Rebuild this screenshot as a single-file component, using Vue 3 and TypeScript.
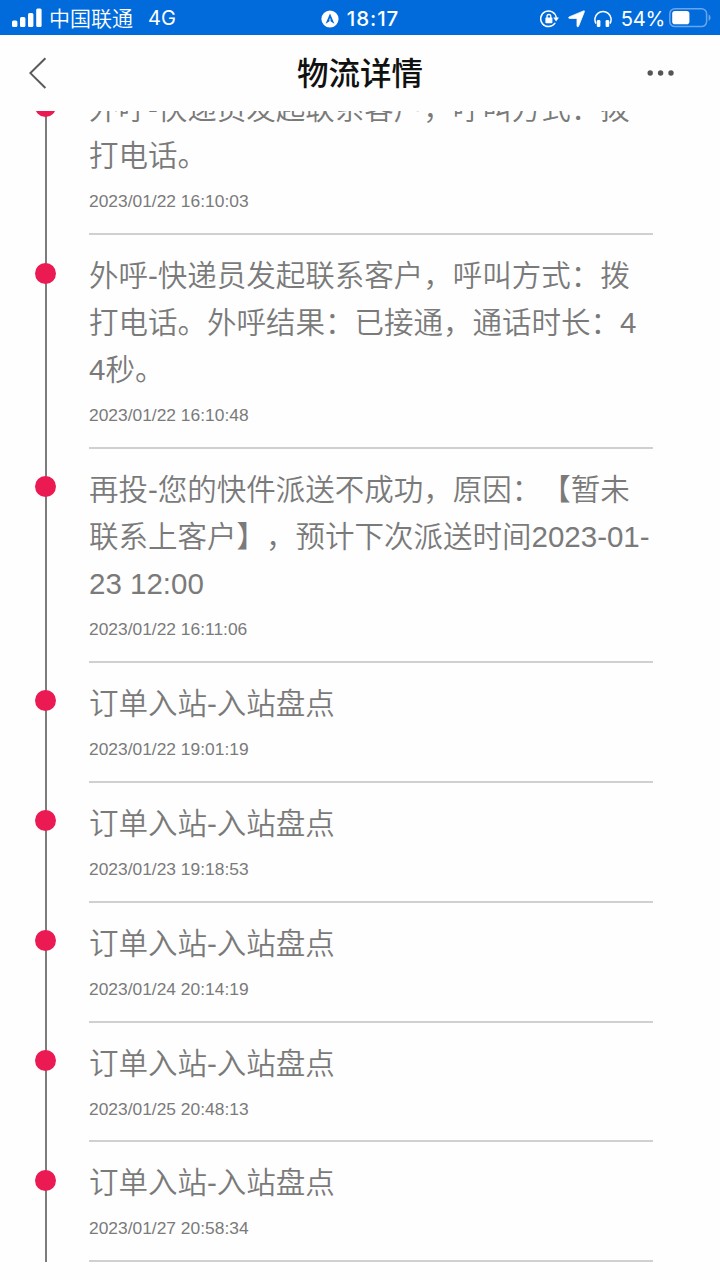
<script setup lang="ts">
interface TrackEvent {
  lines: string[]
  time: string
}

const events: TrackEvent[] = [
  { lines: ['外呼-快递员发起联系客户，呼叫方式：拨', '打电话。'], time: '2023/01/22 16:10:03' },
  { lines: ['外呼-快递员发起联系客户，呼叫方式：拨', '打电话。外呼结果：已接通，通话时长：4', '4秒。'], time: '2023/01/22 16:10:48' },
  { lines: ['再投-您的快件派送不成功，原因：【暂未', '联系上客户】，预计下次派送时间2023-01-', '23 12:00'], time: '2023/01/22 16:11:06' },
  { lines: ['订单入站-入站盘点'], time: '2023/01/22 19:01:19' },
  { lines: ['订单入站-入站盘点'], time: '2023/01/23 19:18:53' },
  { lines: ['订单入站-入站盘点'], time: '2023/01/24 20:14:19' },
  { lines: ['订单入站-入站盘点'], time: '2023/01/25 20:48:13' },
  { lines: ['订单入站-入站盘点'], time: '2023/01/27 20:58:34' },
]
</script>

<template>
  <div class="screen">
    <header class="status">
      <div class="side left">
        <svg class="signal" width="30" height="20" viewBox="0 0 30 20" fill="#fff">
          <rect x="0" y="12.5" width="5.4" height="6.5" rx="1.5" />
          <rect x="8" y="9" width="5.4" height="10" rx="1.5" />
          <rect x="16" y="5" width="5.4" height="14" rx="1.5" />
          <rect x="24.2" y="0.5" width="5.4" height="18.5" rx="1.5" />
        </svg>
        <span class="carrier">中国联通</span>
        <span class="network">4G</span>
      </div>
      <div class="center">
        <svg width="18" height="18" viewBox="0 0 18 18">
          <circle cx="9" cy="9" r="8.6" fill="#fff" />
          <path d="M9 3.4 13.4 13.8 9 11 4.6 13.8Z" fill="#026bdc" />
          <path d="M9 8.6V12" stroke="#fff" stroke-width="1" />
        </svg>
        <span class="clock">18:17</span>
      </div>
      <div class="side right">
        <svg class="lock" width="19" height="18" viewBox="0 0 19 18" fill="none" stroke="#fff">
          <path d="M14.8 13.4A7.8 7.8 0 1 1 16.2 7.4" stroke-width="1.5" stroke-linecap="round" />
          <path d="M13.2 7.4h5.8L16.1 11.4Z" fill="#fff" stroke="none" />
          <rect x="5.4" y="7.6" width="7" height="5.6" rx=".8" fill="#fff" stroke="none" />
          <path d="M7 8V6.4a1.9 1.9 0 0 1 3.8 0V8" stroke-width="1.3" />
        </svg>
        <svg class="arrow" width="17" height="18" viewBox="0 0 17 18">
          <path d="M15.6.9C16.3.6 16.7 1 16.4 1.7L10.6 16.2c-.4.9-1.6.7-1.6-.3V9.3a.9.9 0 0 0-.9-.9H1.5c-1 0-1.2-1.1-.3-1.5Z" fill="#fff" stroke="#fff" stroke-width=".8" stroke-linejoin="round" />
        </svg>
        <svg class="phones" width="18" height="18" viewBox="0 0 18 18" fill="none" stroke="#fff">
          <path d="M2 13.6A8.1 8.1 0 1 1 16 13.6" stroke-width="1.5" />
          <rect x="2.8" y="10" width="3.6" height="7" rx="1.2" fill="#fff" stroke="none" />
          <rect x="11.6" y="10" width="3.6" height="7" rx="1.2" fill="#fff" stroke="none" />
        </svg>
        <span class="percent">54%</span>
        <svg class="battery" width="43" height="20" viewBox="0 0 43 20">
          <rect x=".8" y=".8" width="36.8" height="17.8" rx="5" fill="none" stroke="#68a6eb" stroke-width="1.5" />
          <rect x="3.2" y="3" width="17.2" height="13.2" rx="2.8" fill="#fff" />
          <path d="M39.6 6.6c2.6.9 2.6 5.4 0 6.3Z" fill="#68a6eb" />
        </svg>
      </div>
    </header>

    <nav class="nav">
      <svg class="back" width="20" height="34" viewBox="0 0 20 34" fill="none" stroke="#5a5a5a" stroke-width="2">
        <path d="M17.4 2.2 2.4 17.1 17.4 32" />
      </svg>
      <h1>物流详情</h1>
      <svg class="more" width="28" height="8" viewBox="0 0 28 8" fill="#555">
        <circle cx="3.2" cy="4" r="2.7" />
        <circle cx="13.6" cy="4" r="2.7" />
        <circle cx="24" cy="4" r="2.7" />
      </svg>
    </nav>

    <main class="track">
      <article v-for="event in events" :key="event.time" class="event">
        <div class="rail"><i class="dot"></i></div>
        <div class="body">
          <p v-for="line in event.lines" :key="line">{{ line }}</p>
          <time>{{ event.time }}</time>
        </div>
      </article>
    </main>
  </div>
</template>

<style>
body {
  margin: 0;
  background: #fefefe;
}
</style>

<style scoped>
.screen {
  display: flex;
  flex-direction: column;
  width: 720px;
  height: 1280px;
  overflow: hidden;
  background: #fefefe;
  font-family: "Liberation Sans", "Noto Sans CJK SC", sans-serif;
  text-spacing-trim: space-all;
}
.status {
  flex: none;
  display: grid;
  grid-template-columns: 1fr auto 1fr;
  align-items: center;
  height: 35px;
  box-sizing: border-box;
  padding: 2px 8px 0 12px;
  background: #026bdc;
  color: #fff;
  font-family: Inter, "Noto Sans CJK SC", sans-serif;
  font-size: 21px;
  line-height: 33px;
}
.side,
.center {
  display: flex;
  align-items: center;
  height: 33px;
  white-space: nowrap;
}
.center {
  margin-right: 4px;
}
.right {
  justify-content: flex-end;
}
.signal {
  margin: -2px 7px 0 0;
}
.carrier {
  font-weight: 350;
}
.network {
  margin-left: 15px;
  font-size: 20px;
}
.clock {
  margin-left: 8px;
  font-weight: 550;
  font-size: 20.5px;
  letter-spacing: 0.9px;
}
.arrow {
  margin-left: 9px;
}
.phones {
  margin-left: 9px;
}
.percent {
  margin-left: 9px;
  font-size: 20.2px;
  letter-spacing: -0.3px;
}
.battery {
  margin: -1px 0 0 4px;
}
.nav {
  flex: none;
  display: grid;
  grid-template-columns: 1fr auto 1fr;
  align-items: center;
  height: 76px;
  padding: 0 45px 0 28px;
}
.nav h1 {
  margin: 1px 0 0 17px;
  color: #111;
  font-size: 31.5px;
  font-weight: 500;
  line-height: 46px;
}
.more {
  justify-self: end;
}
.track {
  flex: 1;
  min-height: 0;
  display: flex;
  flex-direction: column;
  justify-content: flex-end;
  box-sizing: border-box;
  padding: 0 67px 17.7px 35px;
  overflow: hidden;
}
.event {
  flex: none;
  display: grid;
  grid-template-columns: 54px 1fr;
}
.rail {
  background: linear-gradient(#7c7c7c, #7c7c7c) 10px 0 / 2px 100% no-repeat;
}
.dot {
  display: block;
  width: 21px;
  height: 21px;
  margin-top: 27.5px;
  border-radius: 50%;
  background: #ec1a52;
}
.body {
  padding: 17px 0 18.9px;
  border-bottom: 2px solid #d0d0d0;
  color: #7a7a7a;
}
.body p {
  margin: 0;
  height: 47px;
  font-size: 29.5px;
  font-weight: 350;
  line-height: 47px;
  white-space: nowrap;
}
.body time {
  display: block;
  margin-top: 9px;
  height: 26px;
  font-size: 17.4px;
  line-height: 26px;
}
</style>
